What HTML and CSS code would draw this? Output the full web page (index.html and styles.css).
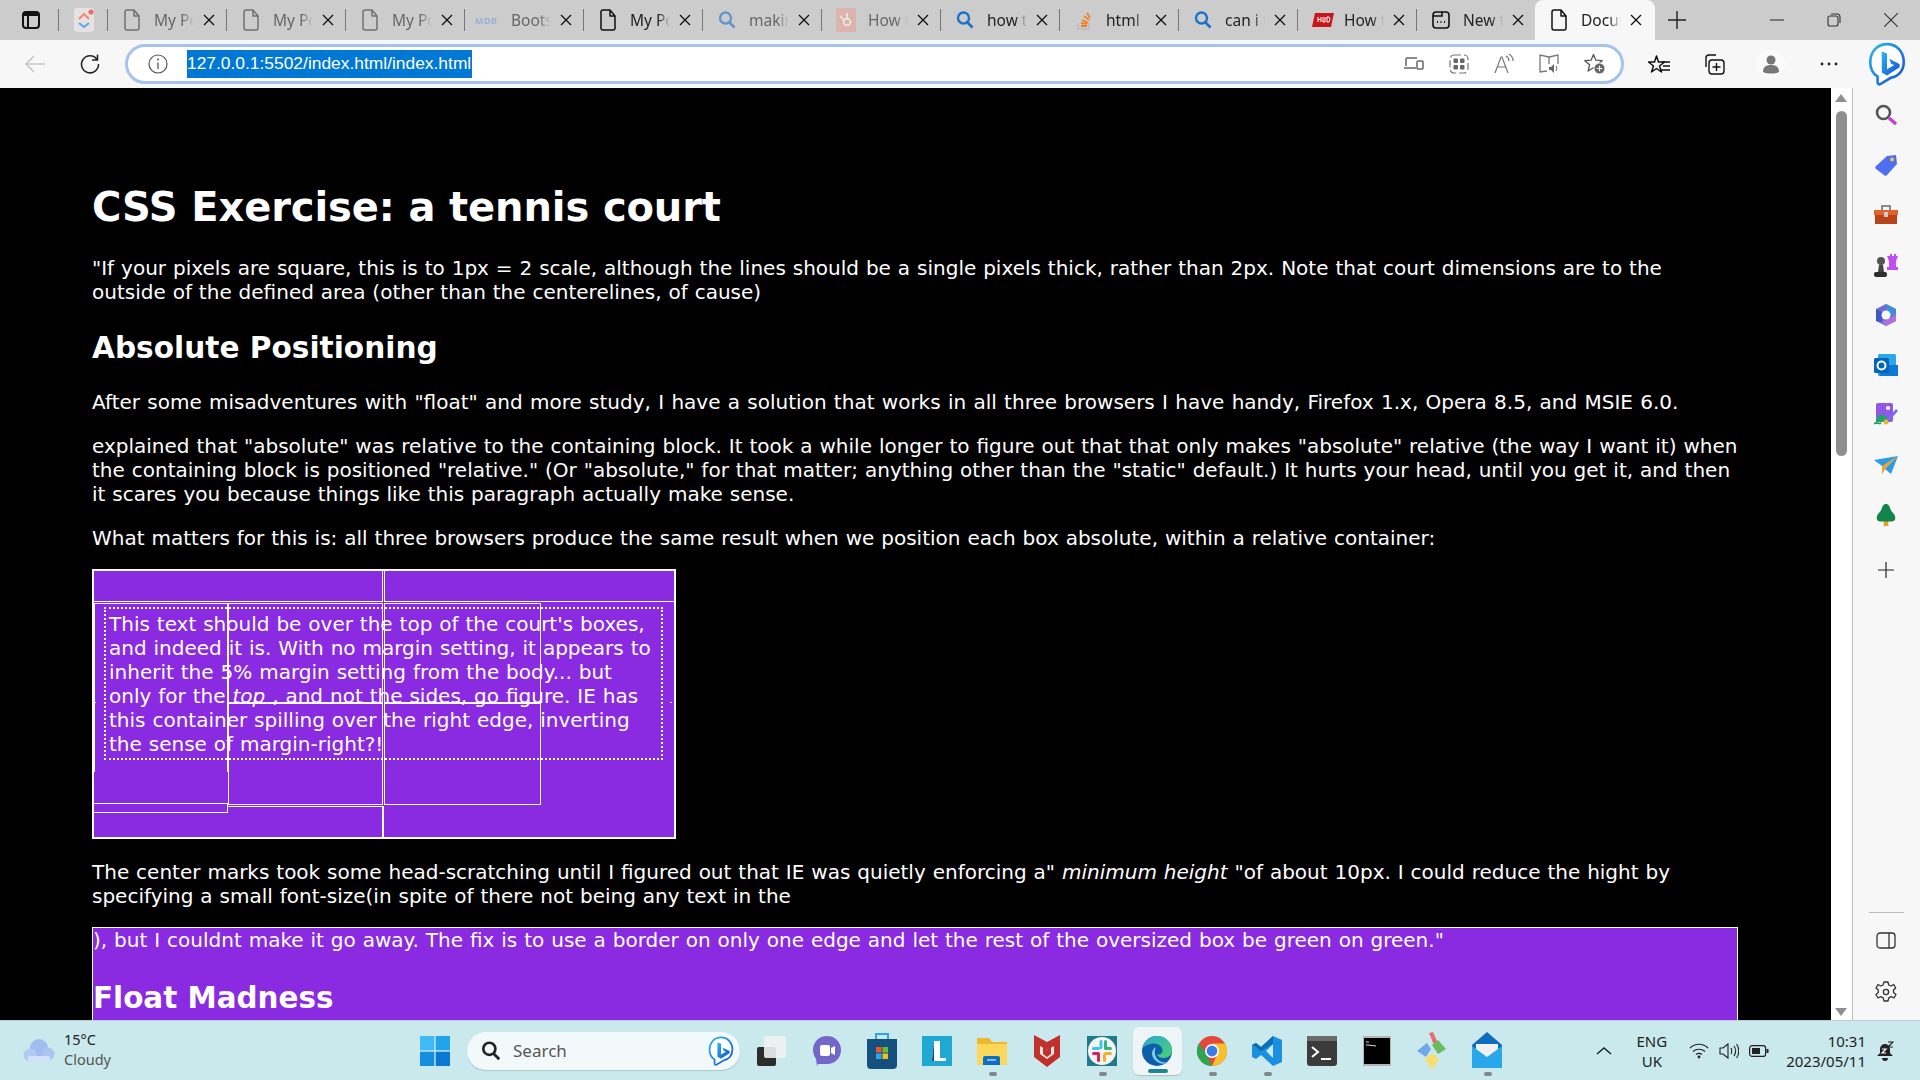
FILE: index.html
```html
<!DOCTYPE html>
<html lang="en">
<head>
<meta charset="utf-8">
<title>Document</title>
<link rel="stylesheet" href="styles.css">
</head>
<body>
<svg class="defs" width="0" height="0">
  <defs>
    <linearGradient id="edgeg" x1="0" y1="0" x2="1" y2="1"><stop offset="0" stop-color="#2aa9d6"/><stop offset="1" stop-color="#4fd26f"/></linearGradient>
    <linearGradient id="bingg" x1="0" y1="0" x2="1" y2="1"><stop offset="0" stop-color="#27b6ee"/><stop offset="1" stop-color="#1a4fd6"/></linearGradient>
  </defs>
  <symbol id="doc" viewBox="0 0 20 24"><path d="M3 4a2 2 0 0 1 2-2h7l5 6v12a2 2 0 0 1-2 2H5a2 2 0 0 1-2-2z M12 2v6h5" fill="none" stroke="currentColor" stroke-width="1.5" stroke-linejoin="round"/></symbol>
  <symbol id="x" viewBox="0 0 12 12"><path d="M1 1l10 10M11 1L1 11" stroke="currentColor" stroke-width="1.3" fill="none"/></symbol>
  <symbol id="mag" viewBox="0 0 20 20"><circle cx="8.5" cy="8" r="5.5" fill="none" stroke="currentColor" stroke-width="2.4"/><path d="M12.5 12.5l5 5" stroke="currentColor" stroke-width="2.6"/></symbol>
  <symbol id="bing" viewBox="0 0 36 42"><path d="M18 2c9 0 16 7 16 17 0 8-5 14-12 15l-10 6c-2 1-3 0-3-2v-5C4 30 2 25 2 19 2 9 9 2 18 2z" fill="#fff" stroke="url(#bingg)" stroke-width="2.5"/><path d="M13 9l5 2v15l7-4-3-1-2-5 10 5v3l-12 8-5-3z" fill="url(#bingg)"/></symbol>
</svg>

<header class="tabbar">
  <div class="tb-lead">
    <svg width="20" height="20" viewBox="0 0 20 20"><rect x="2" y="2" width="16" height="16" rx="3" fill="none" stroke="#111" stroke-width="2"/><rect x="2" y="2" width="16" height="4" fill="#111"/><path d="M7 6v12" stroke="#111" stroke-width="2"/></svg>
  </div>
  <div class="tab tab-pin">
    <svg width="20" height="24" viewBox="0 0 20 24"><rect width="20" height="24" rx="3" fill="#e6e2e4"/><path d="M5 15l5 4 5-4" fill="none" stroke="#5aa5f0" stroke-width="2"/><path d="M5 11l5-5 5 5" fill="none" stroke="#f28b6f" stroke-width="2"/><circle cx="17" cy="4" r="2.6" fill="#ee6b6b"/></svg>
  </div>
  <div class="tab dim"><svg class="ic" width="20" height="24"><use href="#doc"/></svg><span class="tt">My Portfolio</span><svg class="cl" width="12" height="12"><use href="#x"/></svg></div>
  <div class="tab dim"><svg class="ic" width="20" height="24"><use href="#doc"/></svg><span class="tt">My Portfolio</span><svg class="cl" width="12" height="12"><use href="#x"/></svg></div>
  <div class="tab dim"><svg class="ic" width="20" height="24"><use href="#doc"/></svg><span class="tt">My Portfolio</span><svg class="cl" width="12" height="12"><use href="#x"/></svg></div>
  <div class="tab dim"><span class="ic mdb">MDB</span><span class="tt">Bootstrap</span><svg class="cl" width="12" height="12"><use href="#x"/></svg></div>
  <div class="tab"><svg class="ic ic-dark" width="20" height="24"><use href="#doc"/></svg><span class="tt">My Portfolio</span><svg class="cl" width="12" height="12"><use href="#x"/></svg></div>
  <div class="tab dim"><svg class="ic ic-blue" width="20" height="20"><use href="#mag"/></svg><span class="tt">making</span><svg class="cl" width="12" height="12"><use href="#x"/></svg></div>
  <div class="tab dim"><svg class="ic" width="20" height="24" viewBox="0 0 20 24"><rect width="20" height="24" fill="#e9a598"/><circle cx="11" cy="14" r="3.4" fill="none" stroke="#fff" stroke-width="1.6"/><path d="M11 10V5M8 12L4 8" stroke="#fff" stroke-width="1.6"/></svg><span class="tt">How to</span><svg class="cl" width="12" height="12"><use href="#x"/></svg></div>
  <div class="tab"><svg class="ic ic-blue" width="20" height="20"><use href="#mag"/></svg><span class="tt">how to</span><svg class="cl" width="12" height="12"><use href="#x"/></svg></div>
  <div class="tab"><svg class="ic" width="20" height="24" viewBox="0 0 20 24"><path d="M4 15v6h11v-6" fill="none" stroke="#bbb" stroke-width="1.6"/><path d="M7 18h6M7 15l6 1M8 12l6 3M10 8l5 4M13 5l3 5" stroke="#f48024" stroke-width="1.8"/></svg><span class="tt">html -</span><svg class="cl" width="12" height="12"><use href="#x"/></svg></div>
  <div class="tab"><svg class="ic ic-blue" width="20" height="20"><use href="#mag"/></svg><span class="tt">can i t</span><svg class="cl" width="12" height="12"><use href="#x"/></svg></div>
  <div class="tab"><svg class="ic" width="22" height="14" viewBox="0 0 22 14"><path d="M3 0h19l-3 14H0z" fill="#c8161d"/><path d="M6 4v5M9 4v5M6 6.500h3M11 4v5h2V4M15 4v5h2l1-3-1-2z" stroke="#fff" fill="none"/></svg><span class="tt">How to</span><svg class="cl" width="12" height="12"><use href="#x"/></svg></div>
  <div class="tab"><svg class="ic ic-dark" width="20" height="20" viewBox="0 0 20 20"><rect x="2" y="2" width="16" height="16" rx="3" fill="none" stroke="currentColor" stroke-width="1.6"/><path d="M2 6h9V2" fill="none" stroke="currentColor" stroke-width="1.6"/><path d="M6 12h1M9.500 12h1M13 12h1" stroke="currentColor" stroke-width="1.8"/></svg><span class="tt">New tab</span><svg class="cl" width="12" height="12"><use href="#x"/></svg></div>
  <div class="tab tab-active"><svg class="ic ic-dark" width="20" height="24"><use href="#doc"/></svg><span class="tt">Document</span><svg class="cl" width="12" height="12"><use href="#x"/></svg></div>
  <svg class="plus" width="18" height="18" viewBox="0 0 18 18"><path d="M9 0v18M0 9h18" stroke="#222" stroke-width="1.4"/></svg>
  <div class="winctl">
    <svg width="14" height="14" viewBox="0 0 14 14"><path d="M0 7h14" stroke="#333" stroke-width="1.1"/></svg>
    <svg width="14" height="14" viewBox="0 0 14 14"><rect x="1" y="3" width="10" height="10" rx="2" fill="none" stroke="#333" stroke-width="1.100"/><path d="M4 1h6a3 3 0 0 1 3 3v6" fill="none" stroke="#333" stroke-width="1.100"/></svg>
    <svg width="14" height="14" viewBox="0 0 14 14"><path d="M0 0l14 14M14 0L0 14" stroke="#333" stroke-width="1.100"/></svg>
  </div>
</header>

<nav class="toolbar">
  <svg class="back" width="22" height="20" viewBox="0 0 22 20"><path d="M21 10H2M10 2l-8 8 8 8" fill="none" stroke="#c6c6c6" stroke-width="1.600"/></svg>
  <svg class="reload" width="22" height="22" viewBox="0 0 22 22"><path d="M18 6.500A8.500 8.500 0 1 0 19.500 11M18.500 1.500v5.500H13" fill="none" stroke="#222" stroke-width="1.500"/></svg>
  <div class="addr">
    <svg width="20" height="20" viewBox="0 0 20 20"><circle cx="10" cy="10" r="9" fill="none" stroke="#555" stroke-width="1.200"/><path d="M10 8.500v6.500" stroke="#555" stroke-width="1.300"/><circle cx="10" cy="5.500" r="1" fill="#555"/></svg>
    <span class="url">127.0.0.1:5502/index.html/index.html</span>
    <div class="addr-icons">
      <svg width="20" height="18" viewBox="0 0 20 18"><path d="M2 11V4a1 1 0 0 1 1-1h10M0 13h12" fill="none" stroke="#666" stroke-width="1.500"/><rect x="13" y="6" width="6" height="8" rx="1" fill="none" stroke="#666" stroke-width="1.500"/></svg>
      <svg width="20" height="20" viewBox="0 0 20 20"><rect x="1" y="1" width="18" height="18" rx="4" fill="none" stroke="#777" stroke-width="1.200" stroke-dasharray="7 3"/><rect x="4.500" y="4.500" width="4.500" height="4.500" rx="1" fill="#666"/><rect x="11" y="4.500" width="4.500" height="4.500" rx="1" fill="#666"/><rect x="4.500" y="11" width="4.500" height="4.500" rx="1" fill="#666"/><rect x="11" y="11" width="4.500" height="4.500" rx="1" fill="#666"/></svg>
      <svg width="20" height="20" viewBox="0 0 20 20"><path d="M1 19L7 3h1l6 16M3.500 13h8" fill="none" stroke="#777" stroke-width="1.200"/><path d="M12 2c2 1 3 3 3 5M15 0c3 2 4 4 4 7" fill="none" stroke="#777" stroke-width="1.200"/></svg>
      <svg width="20" height="20" viewBox="0 0 20 20"><path d="M10 3L1 1v17l7-1M10 3l9-2v9M10 3v7" fill="none" stroke="#777" stroke-width="1.300"/><path d="M10 13h2l3-3v9l-3-3h-2z" fill="#666"/><path d="M17 12c1 1 1 4 0 5" stroke="#666" fill="none"/></svg>
      <svg width="22" height="22" viewBox="0 0 22 22"><path d="M9.500 1.500l2.400 5.700 6.300.500-4.800 4.100 1.500 6.200-5.400-3.300-5.400 3.300 1.500-6.200L.800 7.700l6.300-.500z" fill="none" stroke="#555" stroke-width="1.300" stroke-linejoin="round"/><circle cx="15.500" cy="15.500" r="5.500" fill="#666" stroke="#fff" stroke-width="1"/><path d="M15.500 12.700v5.600M12.700 15.500h5.600" stroke="#fff" stroke-width="1.200"/></svg>
    </div>
  </div>
  <div class="tools">
    <svg width="22" height="20" viewBox="0 0 22 20"><path d="M8 1l2 6h6l-5 4 2 6-5-3.500L3 17l2-6-5-4h6z" transform="translate(.5 1)" fill="none" stroke="#111" stroke-width="1.500" stroke-linejoin="round"/><path d="M14 8h8M15 12h7M13 16h9" stroke="#111" stroke-width="1.300"/></svg>
    <svg width="22" height="22" viewBox="0 0 22 22"><rect x="6" y="7" width="15" height="14" rx="3" fill="none" stroke="#111" stroke-width="1.400"/><path d="M3 14V5a3 3 0 0 1 3-3h7M13.500 10v8M9.500 14h8" fill="none" stroke="#111" stroke-width="1.400"/></svg>
    <svg class="avatar" width="28" height="28" viewBox="0 0 28 28"><circle cx="14" cy="14" r="14" fill="#fbfbfb"/><circle cx="14" cy="10" r="4.500" fill="#777"/><path d="M6 22c0-6 4-7 8-7s8 1 8 7c-2 1.500-5 1.500-8 1.500s-6 0-8-1.500z" fill="#777"/></svg>
    <svg width="22" height="6" viewBox="0 0 22 6"><circle cx="4" cy="3" r="1.400" fill="#222"/><circle cx="11" cy="3" r="1.400" fill="#222"/><circle cx="18" cy="3" r="1.400" fill="#222"/></svg>
    <svg class="bing-big" width="38" height="44"><use href="#bing"/></svg>
  </div>
</nav>

<div class="main">
  <main class="page">
    <h1>CSS Exercise: a tennis court</h1>
    <p>"If your pixels are square, this is to 1px = 2 scale, although the lines should be a single pixels thick, rather than 2px. Note that court dimensions are to the outside of the defined area (other than the centerelines, of cause)</p>
    <h2>Absolute Positioning</h2>
    <p class="wide">After some misadventures with "float" and more study, I have a solution that works in all three browsers I have handy, Firefox 1.x, Opera 8.5, and MSIE 6.0.</p>
    <p>explained that "absolute" was relative to the containing block. It took a while longer to figure out that that only makes "absolute" relative (the way I want it) when the containing block is positioned "relative." (Or "absolute," for that matter; anything other than the "static" default.) It hurts your head, until you get it, and then it scares you because things like this paragraph actually make sense.</p>
    <p>What matters for this is: all three browsers produce the same result when we position each box absolute, within a relative container:</p>
    <div class="court">
      <div class="box b-tl"></div>
      <div class="box b-tr"></div>
      <div class="box b-ls1"></div>
      <div class="box b-ls2"></div>
      <div class="box b-ml"></div>
      <div class="box b-ml2"></div>
      <div class="box b-mr"></div>
      <div class="box b-mr2"></div>
      <div class="box b-bl"></div>
      <div class="box b-br"></div>
      <i class="pip pip-l"></i><i class="pip pip-r"></i>
      <p class="court-text">This text should be over the top of the court's boxes, and indeed it is. With no margin setting, it appears to inherit the 5% margin setting from the body... but only for the <em>top</em> , and not the sides, go figure. IE has this container spilling over the right edge, inverting the sense of margin-right?!</p>
    </div>
    <p class="after">The center marks took some head-scratching until I figured out that IE was quietly enforcing a" <em>minimum height</em> "of about 10px. I could reduce the hight by specifying a small font-size(in spite of there not being any text in the</p>
    <section class="band">
      <p>), but I couldnt make it go away. The fix is to use a border on only one edge and let the rest of the oversized box be green on green."</p>
      <h2>Float Madness</h2>
    </section>
  </main>

  <div class="scroll">
    <svg width="12" height="8" viewBox="0 0 12 8"><path d="M6 0l6 8H0z" fill="#8f8f8f"/></svg>
    <div class="thumb"></div>
    <svg class="down" width="12" height="8" viewBox="0 0 12 8"><path d="M6 8L0 0h12z" fill="#8f8f8f"/></svg>
  </div>

  <aside class="side">
    <svg width="24" height="24" viewBox="0 0 24 24"><circle cx="9.500" cy="9.500" r="6.500" fill="#f4f6f8" stroke="#555" stroke-width="2.600"/><path d="M15 15l7 6" stroke="#c43be0" stroke-width="3.400"/></svg>
    <svg width="24" height="24" viewBox="0 0 24 24"><path d="M2 13L13 3l9-1 1 9-10 11a2 2 0 0 1-3 0L2 16a2 2 0 0 1 0-3z" fill="#4f6ff0"/><circle cx="18" cy="6.500" r="2" fill="#f2c83a"/></svg>
    <svg width="24" height="24" viewBox="0 0 24 24"><path d="M8 7V3h8v4" fill="none" stroke="#8a8a8a" stroke-width="2"/><path d="M0 7h24v5H0z" fill="#e4602c"/><path d="M1 12h22v9H1z" fill="#b9431c"/><rect x="10" y="9" width="4" height="5" fill="#ccc"/></svg>
    <svg width="24" height="24" viewBox="0 0 24 24"><path d="M16 1h2v2h2V1h2v2h2l-2 5v6h2v3H13v-3h2V8l-2-5h3z" fill="#c34df5"/><circle cx="7" cy="8" r="4" fill="#555"/><path d="M5 12h4l1 7H4z" fill="#444"/><rect y="19" width="13" height="5" rx="2" fill="#2e2e2e"/></svg>
    <svg width="24" height="24" viewBox="0 0 24 24"><path d="M12 1l10 5v12l-10 5-10-5V6z" fill="#6f6bd8"/><path d="M12 1l10 5v6h-6a4 4 0 0 0-4-4z" fill="#3f8fd8"/><path d="M2 6l6 3v10l-6-1z" fill="#4257c4"/><path d="M22 12v6l-10 5-4-4 8-4z" fill="#b070df"/><circle cx="12" cy="12" r="4.500" fill="#f7f7f7"/></svg>
    <svg width="24" height="24" viewBox="0 0 24 24"><rect x="4" y="1" width="18" height="22" rx="1.500" fill="#28a8ea"/><path d="M4 12h20v11H6z" fill="#0f78d4"/><rect y="5" width="15" height="15" rx="1.500" fill="#0364b8"/><circle cx="7.500" cy="12.500" r="4" fill="none" stroke="#fff" stroke-width="2"/></svg>
    <svg width="24" height="24" viewBox="0 0 24 24"><rect x="2" y="0" width="17" height="19" rx="2" fill="#9256e8"/><circle cx="14" cy="5" r="2" fill="#fff"/><path d="M2 17c3-7 7-7 12-2v4H2z" fill="#21a366"/><path d="M12 17L22 6l2 2-10 11z" fill="#7a6cf0"/><circle cx="12" cy="19" r="2.500" fill="#f2b33a"/><path d="M0 21c3-3 4 1 7-1" fill="none" stroke="#139a5a" stroke-width="1.600"/></svg>
    <svg width="24" height="20" viewBox="0 0 24 20"><path d="M0 5l24-4-7 18-6-5-3 5V11z" fill="#2b9de8"/><path d="M8 11L24 1 11 14l-3 5z" fill="#f2a62e"/></svg>
    <svg width="22" height="26" viewBox="0 0 22 26"><rect x="8.500" y="18" width="5" height="7" fill="#e2a21b"/><path d="M11 1c3 0 4 3 5 6s5 5 5 9-3 4-5 4H6c-2 0-5 0-5-4s4-6 5-9 2-6 5-6z" fill="#13854a"/></svg>
    <svg class="side-plus" width="16" height="16" viewBox="0 0 16 16"><path d="M8 0v16M0 8h16" stroke="#222" stroke-width="1.200"/></svg>
    <div class="side-bottom">
      <div class="side-rule"></div>
      <svg width="20" height="18" viewBox="0 0 20 18"><rect x="1" y="1" width="18" height="15" rx="3" fill="none" stroke="#333" stroke-width="1.300"/><path d="M13 1v15" stroke="#333" stroke-width="1.300"/></svg>
      <svg width="22" height="22" viewBox="0 0 22 22"><path d="M9 1h4l.7 3 2.300 1 2.700-1.500 2 3.500-2.200 2v2.500L21 13.500l-2 3.500-2.800-1.400-2.400 1.300-.8 3.100H9l-.8-3.100-2.400-1.300L3 17l-2-3.500 2.300-2V9L1 7l2-3.500L5.700 5 8 4z" fill="none" stroke="#333" stroke-width="1.300" stroke-linejoin="round"/><circle cx="11" cy="11" r="2.600" fill="none" stroke="#333" stroke-width="1.300"/></svg>
    </div>
  </aside>
</div>

<footer class="taskbar">
  <div class="weather">
    <svg width="32" height="26" viewBox="0 0 32 26"><circle cx="16" cy="10" r="9" fill="#9fbdee"/><circle cx="7" cy="17" r="6.500" fill="#b3cbf2"/><circle cx="25" cy="16" r="6.500" fill="#a9c4ef"/><path d="M6 18h20a5 5 0 0 1 0 6H6a5 5 0 0 1 0-6z" fill="#d3e1f8"/></svg>
    <div class="w-text"><span class="w-temp">15°C</span><span class="w-desc">Cloudy</span></div>
  </div>
  <div class="slot">
    <svg width="30" height="30" viewBox="0 0 30 30"><rect width="14.300" height="14.300" fill="#3dbbf2"/><rect x="15.700" width="14.300" height="14.300" fill="#22a4ea"/><rect y="15.700" width="14.300" height="14.300" fill="#138fe0"/><rect x="15.700" y="15.700" width="14.300" height="14.300" fill="#0b78d4"/></svg>
  </div>
  <div class="search">
    <svg class="search-mag" width="22" height="22"><use href="#mag"/></svg>
    <span>Search</span>
    <svg class="search-bing" width="26" height="30"><use href="#bing"/></svg>
  </div>
  <div class="apps">
    <div class="slot"><svg width="30" height="30" viewBox="0 0 30 30"><rect x="0" y="11" width="19" height="19" rx="2" fill="#2c2c2c"/><rect x="7" y="0" width="22" height="22" rx="2" fill="#f1f1f1" opacity=".9"/></svg></div>
    <div class="slot"><svg width="30" height="32" viewBox="0 0 30 32"><path d="M15 1c8 0 14 6 14 14s-6 14-14 14H6l-1 2-1-7C2 21 1 18 1 15 1 7 7 1 15 1z" fill="#7268c9"/><rect x="8" y="10" width="10" height="11" rx="2" fill="#fff"/><path d="M19 13l4-2v9l-4-2z" fill="#fff"/></svg></div>
    <div class="slot"><svg width="30" height="36" viewBox="0 0 30 36"><path d="M9 7V1h12v6" fill="none" stroke="#2aa7e8" stroke-width="2"/><path d="M0 6h30v26a4 4 0 0 1-4 4H4a4 4 0 0 1-4-4z" fill="#16507f"/><rect x="9" y="14" width="5.500" height="5.500" fill="#e95a2c"/><rect x="15.500" y="14" width="5.500" height="5.500" fill="#6fbb2c"/><rect x="9" y="20.500" width="5.500" height="5.500" fill="#2da7ea"/><rect x="15.500" y="20.500" width="5.500" height="5.500" fill="#f5bc1c"/></svg></div>
    <div class="slot"><svg class="fill-l" width="30" height="30" viewBox="0 0 30 30"><rect width="30" height="30" fill="#1fa8d2"/><path d="M12 5h6v17h6v3H10z" fill="#fff"/><path d="M12 5l-2 20h2z" fill="#123f86"/></svg></div>
    <div class="slot"><svg width="32" height="30" viewBox="0 0 32 30"><path d="M1 2h12l3 4h15v22a1 1 0 0 1-1 1H1z" fill="#eeb82c"/><path d="M1 8h30v20a1 1 0 0 1-1 1H2a1 1 0 0 1-1-1z" fill="#fcd75a"/><path d="M7 29v-7a2 2 0 0 1 2-2h13a2 2 0 0 1 2 2v7z" fill="#0d6fc4"/><path d="M11 24h9" stroke="#fff"/></svg><i class="dot"></i></div>
    <div class="slot"><svg width="28" height="32" viewBox="0 0 28 32"><path d="M1 0l13 7 13-7v22l-13 10L1 22z" fill="#c0302d"/><path d="M7 11l7 4 7-4v8l-7 5-7-5z" fill="#f4e7e6"/><path d="M10 12l4 3 4-3v7l-4 3-4-3z" fill="#c0302d"/></svg></div>
    <div class="slot"><svg width="30" height="30" viewBox="0 0 30 30"><rect width="30" height="30" fill="#1e7a8c"/><circle cx="15" cy="15" r="14" fill="#f5f5f5"/><rect x="12.500" y="4" width="3" height="9" rx="1.500" fill="#36c5f0"/><rect x="5" y="11" width="8" height="3" rx="1.500" fill="#36c5f0"/><rect x="17" y="4" width="3" height="9" rx="1.500" fill="#2eb67d"/><rect x="17" y="11" width="8" height="3" rx="1.500" fill="#2eb67d"/><rect x="5" y="16" width="8" height="3" rx="1.500" fill="#e01e5a"/><rect x="10" y="17" width="3" height="9" rx="1.500" fill="#e01e5a"/><rect x="17" y="16" width="8" height="3" rx="1.500" fill="#ecb22e"/><rect x="16" y="17" width="3" height="9" rx="1.500" fill="#ecb22e"/></svg><i class="dot"></i></div>
    <div class="slot slot-on"><svg width="32" height="32" viewBox="0 0 32 32"><circle cx="16" cy="16" r="15" fill="#0c5fa8"/><path d="M1.500 13C3.500 5.500 9.500 1 16 1c9 0 15 7 15 14 0 5-4 8-8.500 8-3 0-5.500-1-6.500-3.500 3 .5 5.500-1 5.500-4 0-4-4-7-8-7-5 0-9 1.500-12 4.500z" fill="url(#edgeg)"/><path d="M15 12c-4 2-5.500 7.500-2 12 3 4 9 6.500 15 3-6 1.500-11.500-1-13.500-6-1-3-1-6 .5-9z" fill="#7fcdf0"/></svg><i class="bar"></i></div>
    <div class="slot"><svg width="30" height="30" viewBox="0 0 30 30"><circle cx="15" cy="15" r="15" fill="#e3483a"/><path d="M15 30A15 15 0 0 1 2 7.500L9.500 18z" fill="#2da44e"/><path d="M15 30A15 15 0 0 0 28 7.500H15l5.500 10z" fill="#f6c02d"/><circle cx="15" cy="15" r="7" fill="#fff"/><circle cx="15" cy="15" r="5.400" fill="#3a7de8"/></svg><i class="dot"></i></div>
    <div class="slot"><svg width="30" height="30" viewBox="0 0 30 30"><path d="M21 0l9 4v22l-9 4-12-11-5 4-4-2V9l4-2 5 4zM21 8l-7 7 7 7z" fill="#1b8fe0"/><path d="M21 0L9 11l-5-4-4 2 4 2 5 4 12-7z" fill="#0c6cb5"/></svg><i class="dot"></i></div>
    <div class="slot"><svg width="30" height="30" viewBox="0 0 30 30"><rect width="30" height="30" rx="3" fill="#3b3b3b"/><rect width="30" height="5" fill="#6a6a6a"/><path d="M5 11l6 5-6 5" fill="none" stroke="#fff" stroke-width="2"/><path d="M14 23h10" stroke="#fff" stroke-width="2"/></svg></div>
    <div class="slot"><svg width="28" height="30" viewBox="0 0 28 30"><rect width="28" height="30" fill="#b5b5b5"/><rect x="1" y="2" width="26" height="26" fill="#000"/><path d="M3 6h3M3 9h2l8 1" stroke="#ddd"/></svg></div>
    <div class="slot"><svg width="30" height="38" viewBox="0 0 30 38"><path d="M12 1l4-1 4 9-3 4z" fill="#ec6a6a"/><path d="M15 13l6-5 8 9-8 5z" fill="#6dbb5c"/><path d="M0 19l10-8 4 6-5 8z" fill="#6fa8ea"/><path d="M8 27l7-6 7 6-7 11z" fill="#f6df72"/></svg></div>
    <div class="slot"><svg width="30" height="38" viewBox="0 0 30 38"><path d="M15 0l15 13v21H0V13z" fill="#0f6cbd"/><path d="M4 12h22v7l-11 7-11-7z" fill="#f1f1f1"/><path d="M0 14l15 11 15-11v22H0z" fill="#28a8ea"/></svg><i class="dot"></i></div>
  </div>
  <div class="tray">
    <svg class="chev" width="16" height="10" viewBox="0 0 16 10"><path d="M1 8l7-6 7 6" fill="none" stroke="#222" stroke-width="1.500"/></svg>
    <div class="lang"><span>ENG</span><span>UK</span></div>
    <svg width="20" height="16" viewBox="0 0 20 16"><path d="M1 5c5-5 13-5 18 0M4 8.500c3.500-3 8.500-3 12 0M7 11.500c2-1.500 4-1.500 6 0" fill="none" stroke="#222" stroke-width="1.200"/><circle cx="10" cy="14" r="1.400" fill="#222"/></svg>
    <svg width="20" height="18" viewBox="0 0 20 18"><path d="M1 6h3l5-4v14l-5-4H1z" fill="none" stroke="#222" stroke-width="1.100"/><path d="M12 6c1 2 1 4 0 6M15 4c2 3 2 7 0 10M17.500 2c3 4 3 10 0 14" fill="none" stroke="#222" stroke-width="1.100"/></svg>
    <svg width="20" height="12" viewBox="0 0 20 12"><rect x=".6" y=".6" width="16" height="10.800" rx="2.500" fill="none" stroke="#222" stroke-width="1.200"/><rect x="3" y="3" width="8" height="6" fill="#222"/><rect x="17.500" y="4" width="2" height="4" fill="#222"/></svg>
    <div class="clock"><span>10:31</span><span>2023/05/11</span></div>
    <svg class="bell" width="18" height="20" viewBox="0 0 18 20"><path d="M9 3a5 5 0 0 0-5 5v4l-3 3h16l-3-3V8a5 5 0 0 0-5-5z" fill="#222"/><path d="M6 17a3 3 0 0 0 6 0z" fill="#222"/><path d="M6 8h4l-4 4h4" fill="none" stroke="#fff" stroke-width="1.200"/><path d="M12 1h5l-5 5h5" fill="none" stroke="#222" stroke-width="1.200"/></svg>
  </div>
</footer>
</body>
</html>
```
FILE: styles.css
```css
* { box-sizing: border-box; }
html, body { margin: 0; height: 100%; overflow: hidden; }
body { display: flex; flex-direction: column; width: 1920px; height: 1080px; font-family: "Noto Sans", sans-serif; }
.defs { position: absolute; }

.tabbar { height: 40px; flex: none; display: flex; align-items: center; background: #cccccc; }
.tb-lead { width: 59px; height: 22px; padding-left: 21px; display: flex; align-items: center; border-right: 1px solid #777; }
.tab { position: relative; width: 119px; height: 22px; flex: none; display: flex; align-items: center; border-right: 1px solid #777; }
.tab-pin { width: 49px; padding-left: 15px; }
.ic { position: absolute; left: 14px; top: 50%; transform: translateY(-50%); color: #333; }
.ic-dark { color: #111; }
.ic-blue { color: #1a73c9; }
.tt { position: absolute; left: 46px; width: 40px; overflow: hidden; white-space: nowrap; font-size: 15.500px; color: #222; -webkit-mask-image: linear-gradient(90deg, #000 70%, transparent); mask-image: linear-gradient(90deg, #000 70%, transparent); }
.cl { position: absolute; left: 95px; color: #111; }
.dim .ic, .dim .tt { opacity: .6; }
.mdb { font: bold 9px "Noto Sans", sans-serif; color: #7f9fd8; left: 10px; letter-spacing: .5px; }
.tab-active { width: 120px; height: 40px; margin-left: -1px; align-self: flex-start; background: #f7f7f7; border: 0; border-radius: 8px 8px 0 0; }
.plus { margin-left: 13px; }
.winctl { margin-left: auto; display: flex; align-items: center; gap: 43px; padding-right: 22px; }

.toolbar { height: 48px; flex: none; display: flex; align-items: center; background: #f7f7f7; position: relative; }
.back { margin-left: 24px; }
.reload { margin-left: 33px; }
.addr { margin-left: 24px; width: 1499px; height: 40px; display: flex; align-items: center; padding-left: 20px; background: #fff; border: 3px solid #a5c3ee; border-radius: 20px; }
.url { margin-left: 19px; width: 285px; height: 28px; background: #0078d4; color: #fff; font: 17.400px/27px "Liberation Sans", sans-serif; white-space: nowrap; }
.addr-icons { margin-left: auto; display: flex; align-items: center; gap: 25px; padding-right: 15px; }
.tools { margin-left: 24px; display: flex; align-items: center; gap: 33px; }
.avatar { margin-left: -1px; }
.bing-big { margin-left: -5px; }

.main { flex: 1; min-height: 0; display: flex; }
.page { flex: none; width: 1831px; height: 932px; overflow: hidden; background: #000; color: #fff; padding: 0 93px 0 92px; font: 20px/24px "DejaVu Sans", Verdana, sans-serif; word-spacing: .57px; }
.page p { margin: 0 0 20px; }
.page .wide { word-spacing: .95px; }
.page h1 { margin: 95px 0 25px; font-size: 40px; line-height: 48px; font-weight: bold; letter-spacing: -.12px; word-spacing: 0; }
.page h2 { margin: 26px 0 24px; font-size: 29.600px; line-height: 36px; font-weight: bold; word-spacing: 0; }

.court { position: relative; width: 584px; height: 270px; margin: -1px 0 21px; background: #8a2be2; border: 2px solid #fff; }
.box { position: absolute; border: 1px solid #fff; }
.b-tl { left: 0; top: 0; width: 289px; height: 31px; border-width: 0 1px 1px 0; }
.b-tr { left: 290px; top: 0; width: 292px; height: 31px; border-width: 0 0 1px 1px; }
.b-ls1 { left: 0; top: 32px; width: 134px; height: 169px; border-width: 1px 1px 0 1px; }
.b-ls2 { left: -1px; top: 232px; width: 135px; height: 10px; border-width: 1px 1px 1px 0; }
.b-ml { left: 134px; top: 32px; width: 155px; height: 100px; }
.b-ml2 { left: 134px; top: 132px; width: 155px; height: 102px; }
.b-mr { left: 290px; top: 32px; width: 157px; height: 100px; }
.b-mr2 { left: 290px; top: 132px; width: 157px; height: 102px; }
.b-bl { left: 134px; top: 235px; width: 155px; height: 33px; border-width: 1px 0 0; }
.b-br { left: 288px; top: 235px; width: 1px; height: 33px; }
.pip { position: absolute; width: 2px; height: 1px; background: #fff; top: 131px; }
.pip-l { left: 0; }
.pip-r { right: 2px; }
.page .court-text { position: absolute; z-index: 1; left: 10px; top: 36px; width: 559px; height: 153px; margin: 0; padding: 3px 3px; border: 2px dotted #fff; }

.page .after { margin-bottom: 19px; }
.band { height: 200px; background: #8a2be2; border: 1px solid #fff; }
.band h2 { margin-top: 28px; font-size: 29.400px; }

.scroll { flex: none; width: 22px; background: #fff; border-right: 1px solid #bdbdbd; display: flex; flex-direction: column; align-items: center; padding: 6px 1px 0 0; position: relative; }
.thumb { width: 11px; height: 345px; margin-top: 9px; border-radius: 6px; background: #8f8f8f; }
.down { margin-top: auto; margin-bottom: 4px; }

.side { flex: 1; background: #f7f7f7; display: flex; flex-direction: column; align-items: center; padding: 15px 1px 0 0; }
.side > svg { height: 24px; margin-bottom: 26px; flex: none; }
.side > .side-plus { height: 16px; margin: 9px 0 0; }
.side-bottom { margin-top: auto; display: flex; flex-direction: column; align-items: center; padding-bottom: 17px; }
.side-rule { width: 35px; height: 1px; background: #bbb; margin-bottom: 19px; }
.side-bottom svg:last-child { margin-top: 31px; }

.taskbar { height: 60px; flex: none; display: flex; align-items: center; background: #c9e9ec; border-top: 1px solid #bcd; font-size: 15px; color: #222; }
.weather { width: 407px; padding-left: 23px; display: flex; align-items: center; gap: 9px; }
.w-text { display: flex; flex-direction: column; font-size: 14.500px; line-height: 20px; margin-top: -4px; }
.w-desc { color: #555; }
.slot { position: relative; width: 55px; height: 48px; flex: none; display: flex; align-items: center; justify-content: center; }
.search { width: 273px; height: 38px; margin-left: 5px; display: flex; align-items: center; padding: 0 6px 0 13px; background: #f2f9fa; border-radius: 19px; box-shadow: 0 1px 1px #a9c6c9; }
.search span { margin-left: 11px; font-size: 17px; color: #555; }
.search-bing { margin-left: auto; }
.apps { display: flex; margin-left: 4.500px; }
.slot-on::before { content: ""; position: absolute; left: 3px; right: 3px; top: 0; bottom: 0; background: #eef5f6; border-radius: 6px; box-shadow: 0 1px 1px #bbb; }
.slot-on svg { position: relative; }
.dot { position: absolute; left: 24px; bottom: -1px; width: 8px; height: 4px; border-radius: 2px; background: #7d8a8c; }
.bar { position: absolute; left: 18px; bottom: 2px; width: 20px; height: 4px; border-radius: 2px; background: #1e8796; }
.tray { flex: 1; display: flex; align-items: center; padding-left: 81px; }
.lang { margin-left: 25px; display: flex; flex-direction: column; align-items: center; line-height: 20px; font-size: 15px; }
.lang + svg { margin-left: 22px; }
.tray > svg + svg { margin-left: 10px; }
.clock { margin-left: auto; display: flex; flex-direction: column; align-items: flex-end; line-height: 20px; font-size: 15px; }
.bell { margin: 0 26px 0 10px; }
```
